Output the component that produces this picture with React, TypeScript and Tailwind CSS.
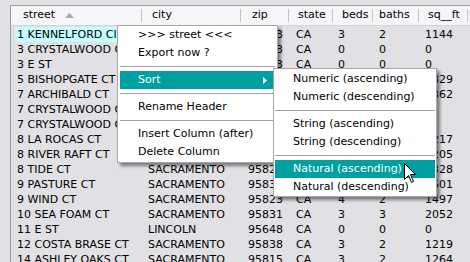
import React from "react";

// Colonnes : largeur (séparateur inclus), retrait de l'en-tête, retrait des cellules
const cols = [
  { label: "street", w: "w-[131px]", hp: "pl-[12px]", bp: "pl-[6px]" },
  { label: "city", w: "w-[99px]", hp: "pl-[10px]", bp: "pl-[6px]" },
  { label: "zip", w: "w-[48px]", hp: "pl-[11px]", bp: "pl-[7px]" },
  { label: "state", w: "w-[44px]", hp: "pl-[9px]", bp: "pl-[7px]" },
  { label: "beds", w: "w-[40px]", hp: "pl-[9px]", bp: "pl-[5px]" },
  { label: "baths", w: "w-[46px]", hp: "pl-[6px]", bp: "pl-[6px]" },
  { label: "sq__ft", w: "w-[49px]", hp: "pl-[9px]", bp: "pl-[6px]" },
];

const rows = [
  ["1 KENNELFORD CIR", "SACRAMENTO", "95823", "CA", "3", "2", "1144"],
  ["3 CRYSTALWOOD CIR", "SACRAMENTO", "95833", "CA", "0", "0", "0"],
  ["3 E ST", "SACRAMENTO", "95823", "CA", "0", "0", "0"],
  ["5 BISHOPGATE CT", "SACRAMENTO", "95823", "CA", "3", "2", "1329"],
  ["7 ARCHIBALD CT", "SACRAMENTO", "95823", "CA", "3", "2", "1362"],
  ["7 CRYSTALWOOD CIR", "SACRAMENTO", "95833", "CA", "0", "0", "0"],
  ["7 CRYSTALWOOD CIR", "SACRAMENTO", "95833", "CA", "0", "0", "0"],
  ["8 LA ROCAS CT", "SACRAMENTO", "95823", "CA", "3", "2", "1217"],
  ["8 RIVER RAFT CT", "SACRAMENTO", "95823", "CA", "3", "2", "1205"],
  ["8 TIDE CT", "SACRAMENTO", "95823", "CA", "3", "2", "1328"],
  ["9 PASTURE CT", "SACRAMENTO", "95834", "CA", "3", "2", "1601"],
  ["9 WIND CT", "SACRAMENTO", "95823", "CA", "4", "2", "1497"],
  ["10 SEA FOAM CT", "SACRAMENTO", "95831", "CA", "3", "3", "2052"],
  ["11 E ST", "LINCOLN", "95648", "CA", "0", "0", "0"],
  ["12 COSTA BRASE CT", "SACRAMENTO", "95838", "CA", "3", "2", "1219"],
  ["14 ASHLEY OAKS CT", "SACRAMENTO", "95815", "CA", "3", "2", "1264"],
  ["17 SERASPI CT", "SACRAMENTO", "95834", "CA", "0", "0", "0"],
];

function Item({ label, active, arrow }: { label: string; active?: boolean; arrow?: boolean }) {
  return (
    <div
      className={
        active
          ? "flex h-[18px] items-center bg-[#00a0a0] pl-[18px] pr-[6px] text-white"
          : "flex h-[18px] items-center pl-[18px] pr-[6px] text-black"
      }
    >
      <span className="whitespace-nowrap">{label}</span>
      {arrow && (
        <svg className="ml-auto mr-[2px]" width="4" height="7" viewBox="0 0 4 7">
          <path d="M0 0 L4 3.5 L0 7 Z" fill="#fff" />
        </svg>
      )}
    </div>
  );
}

function Sep() {
  return (
    <div className="flex h-[9px] items-center">
      <div className="h-px w-full bg-[#a0a0a0]" />
    </div>
  );
}

export default function App() {
  return (
    <div className="relative h-[262px] w-[470px] overflow-hidden bg-[#e1e0e4] pl-[10px] pt-[5px] font-['DejaVu_Sans',sans-serif] text-[11px] text-black">
      <div className="h-full border-l border-t border-[#9c9c9c]">
        {/* En-tête */}
        <div className="flex h-[20px] border-b border-[#d4d4d8] bg-[#f6f6f8]">
          {cols.map((c, i) => (
            <div key={c.label} className={`${c.w} ${c.hp} flex h-full items-center`}>
              <span>{c.label}</span>
              {i === 0 && (
                <svg className="ml-[10px]" width="9" height="5" viewBox="0 0 9 5">
                  <path d="M0 5 L4.5 0 L9 5 Z" fill="#a9a9a9" />
                </svg>
              )}
              <span className="ml-auto h-[13px] w-px bg-[#c4c4c8]" />
            </div>
          ))}
        </div>

        {/* Lignes */}
        <div className="pt-[1px]">
          {rows.map((r, ri) => (
            <div key={ri} className="flex h-[15px] leading-[15px]">
              {r.map((v, ci) =>
                ri === 0 && ci === 0 ? (
                  <div key={ci} className={`${cols[ci].w} overflow-hidden pl-[4px]`}>
                    <div className="h-full whitespace-nowrap bg-[#c4fefe] pl-[2px]">{v}</div>
                  </div>
                ) : (
                  <div key={ci} className={`${cols[ci].w} ${cols[ci].bp} overflow-hidden whitespace-nowrap`}>
                    {v}
                  </div>
                )
              )}
            </div>
          ))}
        </div>
      </div>

      {/* Menu contextuel */}
      <div className="absolute left-[117px] top-[25px] w-[161px] border border-[#a8a8a8] bg-white px-[2px] pb-[1px] shadow-[3px_3px_3px_rgba(0,0,0,0.45)]">
        <Item label=">>> street <<<" />
        <Item label="Export now ?" />
        <Sep />
        <Item label="Sort" active arrow />
        <Sep />
        <Item label="Rename Header" />
        <Sep />
        <Item label="Insert Column (after)" />
        <Item label="Delete Column" />
      </div>

      {/* Sous-menu Sort */}
      <div className="absolute left-[273px] top-[68px] w-[164px] border border-[#a8a8a8] bg-white px-[1px] pt-[1px] shadow-[3px_3px_3px_rgba(0,0,0,0.45)]">
        <Item label="Numeric (ascending)" />
        <Item label="Numeric (descending)" />
        <Sep />
        <Item label="String (ascending)" />
        <Item label="String (descending)" />
        <Sep />
        <Item label="Natural (ascending)" active />
        <Item label="Natural (descending)" />
      </div>

      {/* Curseur */}
      <svg className="absolute left-[404px] top-[163px]" width="13" height="21" viewBox="0 0 13 21">
        <path d="M0.5 0.5 L0.5 16.5 L4.5 12.5 L7.5 19.5 L9.5 18.5 L6.5 11.5 L11.5 11.5 Z" fill="#fff" stroke="#000" strokeWidth="1" />
      </svg>
    </div>
  );
}
